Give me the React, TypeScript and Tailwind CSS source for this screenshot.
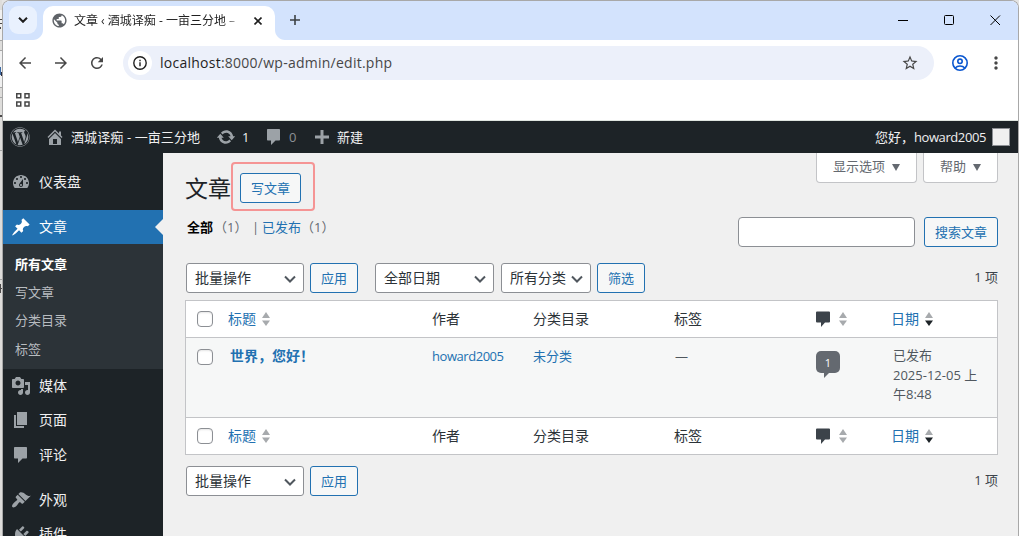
import React from "react";
import { FaWordpress } from "react-icons/fa";
import { MdArrowBack, MdArrowForward, MdRefresh, MdStarBorder, MdMoreVert, MdPublic } from "react-icons/md";

const PATHS = {
  dashboard:
    "M3.76 16h12.48c1.1-1.37 1.76-3.11 1.76-5 0-4.42-3.58-8-8-8s-8 3.58-8 8c0 1.89.66 3.63 1.76 5zM10 4c.55 0 1 .45 1 1s-.45 1-1 1-1-.45-1-1 .45-1 1-1zM6 6c.55 0 1 .45 1 1s-.45 1-1 1-1-.45-1-1 .45-1 1-1zm8 0c.55 0 1 .45 1 1s-.45 1-1 1-1-.45-1-1 .45-1 1-1zm-5.37 5.55L12 7v6c0 1.1-.9 2-2 2s-2-.9-2-2c0-.57.24-1.08.63-1.45zM4 10c.55 0 1 .45 1 1s-.45 1-1 1-1-.45-1-1 .45-1 1-1zm12 0c.55 0 1 .45 1 1s-.45 1-1 1-1-.45-1-1 .45-1 1-1zm-5 3c0-.55-.45-1-1-1s-1 .45-1 1 .45 1 1 1 1-.45 1-1z",
  post: "M10.44 3.02l1.82-1.82 6.36 6.35-1.83 1.82c-1.05-.68-2.48-.57-3.41.36l-.75.75c-.92.93-1.04 2.35-.35 3.41l-1.83 1.82-2.41-2.41-2.8 2.79c-.42.42-3.38 2.71-3.8 2.29s1.86-3.39 2.28-3.81l2.79-2.79L4.1 9.36l1.83-1.82c1.05.69 2.48.57 3.4-.36l.75-.75c.93-.92 1.05-2.35.36-3.41z",
  media:
    "M13 11V4c0-.55-.45-1-1-1h-1.67L9 1H5L3.67 3H2c-.55 0-1 .45-1 1v7c0 .55.45 1 1 1h10c.55 0 1-.45 1-1zM7 4.5c1.38 0 2.5 1.12 2.5 2.5S8.38 9.5 7 9.5 4.5 8.38 4.5 7 5.62 4.5 7 4.5zM14 6h5v10.5c0 1.38-1.12 2.5-2.5 2.5S14 17.88 14 16.5s1.12-2.5 2.5-2.5c.17 0 .34.02.5.05V9h-3V6zm-4 8.05V13h2v3.5c0 1.38-1.12 2.5-2.5 2.5S7 17.88 7 16.5 8.12 14 9.5 14c.17 0 .34.02.5.05z",
  page: "M6 15V2h10v13H6zm-1 1h8v2H3V5h2v11z",
  comment: "M4 2h11c.6 0 1 .4 1 1v9.500c0 .6-.4 1-1 1h-3.500L7 18v-4.500H4c-.6 0-1-.4-1-1V3c0-.6.4-1 1-1z",
  appearance:
    "M14.48 11.06L7.41 3.99l1.5-1.5c.5-.56 2.3-.47 3.51.32 1.21.8 1.43 1.28 2.91 2.1 1.18.64 2.45 1.26 4.45.85zm-.71.71L6.7 4.7 4.93 6.47c-.39.39-.39 1.02 0 1.41l1.06 1.06c.39.39.39 1.03 0 1.42-.6.6-1.43 1.11-2.21 1.69-.35.26-.7.53-1.01.84C1.43 14.23.4 16.08 1.4 17.07c.99 1 2.84-.03 4.18-1.36.31-.31.58-.66.85-1.02.57-.78 1.08-1.61 1.69-2.21.39-.39 1.02-.39 1.41 0l1.06 1.06c.39.39 1.02.39 1.41 0z",
  plugins:
    "M13.11 4.36L9.87 7.6 8 5.73l3.24-3.24c.35-.34 1.05-.2 1.56.32.52.51.66 1.21.31 1.55zm-8 1.77l.91-1.12 9.01 9.01-1.19.84c-.71.71-2.63 1.16-3.82 1.16H6.14L4.9 17.26c-.59.59-1.54.59-2.12 0-.59-.58-.59-1.53 0-2.12l1.24-1.24v-3.88c0-1.13.4-3.19 1.09-3.89zm7.26 3.97l3.24-3.24c.34-.35 1.04-.21 1.55.31.52.51.66 1.21.31 1.55l-3.24 3.25z",
  home: "M16 8.5l1.53 1.53-1.06 1.06L10 4.6l-6.47 6.49-1.06-1.06L10 2.5l4 4v-2h2v4zm-6-2.46l6 5.99V18H4v-5.97zM12 17v-5H8v5h4z",
  update:
    "M10.2 3.28c3.53 0 6.43 2.61 6.92 6h2.08l-3.5 4-3.5-4h2.32c-.45-1.97-2.21-3.45-4.32-3.45-1.45 0-2.73.71-3.54 1.78L4.95 5.66C6.23 4.2 8.11 3.28 10.2 3.28zm-.4 13.44c-3.52 0-6.43-2.61-6.92-6H.8l3.5-4c1.17 1.33 2.33 2.67 3.5 4H5.48c.45 1.97 2.21 3.45 4.32 3.45 1.45 0 2.73-.71 3.54-1.78l1.71 1.95c-1.28 1.46-3.15 2.38-5.25 2.38z",
  plus: "M17 8.5v3h-5.500V17h-3v-5.500H3v-3h5.500V3h3v5.500z",
};

function Dash({ name, className = "size-5" }: { name: keyof typeof PATHS; className?: string }) {
  return (
    <svg viewBox="0 0 20 20" className={`shrink-0 fill-current ${className}`}>
      <path d={PATHS[name]} fillRule="evenodd" />
    </svg>
  );
}

function BrowserChrome() {
  return (
    <header className="shrink-0 bg-white text-[#1f1f1f]">
      <div className="flex h-[39px] bg-[#d3e3fd]">
        <div className="flex w-10 shrink-0 pt-[5px] pl-1.5">
          <button className="grid size-7 place-items-center rounded-[9px] bg-[#e9f1fe]">
            <svg viewBox="0 0 10 6" className="h-1.5 w-2.5 fill-none stroke-[#1f1f1f] stroke-2">
              <path d="M1 .8l4 4 4-4" />
            </svg>
          </button>
        </div>
        <div className="relative mt-[5px] flex h-[34px] w-[232px] shrink-0 items-center rounded-t-[10px] bg-white pb-[5px] pl-2">
          <svg viewBox="0 0 10 10" className="absolute bottom-0 -left-2.5 size-2.5 fill-white">
            <path d="M10 0v10H0C5.500 10 10 5.500 10 0z" />
          </svg>
          <svg viewBox="0 0 10 10" className="absolute -right-2.5 bottom-0 size-2.5 fill-white">
            <path d="M0 0v10h10C4.500 10 0 5.500 0 0z" />
          </svg>
          <MdPublic className="size-[17px] shrink-0 text-[#5f6368]" />
          <span className="ml-[6px] w-[170px] text-[12px] leading-5 whitespace-nowrap [mask-image:linear-gradient(to_right,black_88%,transparent)]">
            文章 ‹ 酒城译痴 - 一亩三分地 –
          </span>
          <svg viewBox="0 0 8 8" className="ml-[10px] size-2 shrink-0 fill-none stroke-[#1f1f1f] stroke-[1.6]">
            <path d="M.5.500l7 7M7.500.500l-7 7" />
          </svg>
        </div>
        <svg viewBox="0 0 10 10" className="mt-[14px] ml-[15px] size-2.5 fill-none stroke-[#3c4043] stroke-[1.6]">
          <path d="M5 0v10M0 5h10" />
        </svg>
        <div className="ml-auto flex h-[39px] items-center gap-[35px] pr-[17px]">
          <svg viewBox="0 0 11 11" className="size-[11px] fill-none stroke-black">
            <path d="M0 5.500h10" />
          </svg>
          <svg viewBox="0 0 11 11" className="size-[11px] fill-none stroke-black">
            <rect x=".5" y=".5" width="9" height="9" rx="1" />
          </svg>
          <svg viewBox="0 0 11 11" className="size-[11px] fill-none stroke-black">
            <path d="M.5.500l9.500 9.500M10 .5L.5 10" />
          </svg>
        </div>
      </div>
      <div className="flex h-[46px] items-center rounded-tr-[8px] text-[#474747]">
        <MdArrowBack className="ml-[13px] size-[18px]" />
        <MdArrowForward className="ml-[18px] size-[18px]" />
        <MdRefresh className="ml-[18px] size-[18px]" />
        <div className="ml-[17px] flex h-[34px] w-[811px] items-center rounded-full bg-[#ecf0fa] pl-[5px]">
          <span className="grid size-6 place-items-center rounded-full bg-white">
            <svg viewBox="0 0 14 14" className="size-3.5 fill-none stroke-[#1f1f1f] stroke-[1.4]">
              <circle cx="7" cy="7" r="6.200" />
              <path d="M7 6.200v4M7 3.700v1.500" />
            </svg>
          </span>
          <span className="ml-2 text-[14px] leading-5 tracking-[0.25px]">
            <span className="text-[#1f1f1f]">localhost</span>:8000/wp-admin/edit.php
          </span>
          <MdStarBorder className="mr-[15px] ml-auto size-[18px]" />
        </div>
        <svg viewBox="0 0 16 16" className="ml-[18px] size-4 fill-none stroke-[#0b57d0] stroke-[1.6]">
          <circle cx="8" cy="8" r="7.200" />
          <circle cx="8" cy="6.300" r="2.200" />
          <path d="M3.200 13C5.500 10.300 10.500 10.300 12.800 13" />
        </svg>
        <MdMoreVert className="ml-[18px] size-5" />
      </div>
      <div className="flex h-[34px] items-start pt-[7px] pl-[13px] text-[#474747]">
        <svg viewBox="0 0 14 14" className="size-3.5 fill-none stroke-current stroke-[1.5]">
          <path d="M.75.75h4v4h-4zM9 .75h4v4H9zM.75 9h4v4h-4zM9 9h4v4H9z" />
        </svg>
      </div>
      <div className="h-px bg-[#dfe5e0]" />
    </header>
  );
}

function AdminBar() {
  return (
    <div className="flex h-8 shrink-0 items-center bg-[#1d2327] text-[13px] leading-8 text-[#f0f0f1]">
      <FaWordpress className="ml-[7px] size-5 text-[#9ca2a7]" />
      <Dash name="home" className="ml-[15px] size-5 text-[#9ca2a7]" />
      <span className="ml-[6px] w-[130px] tracking-[0.1px] whitespace-nowrap">酒城译痴 - 一亩三分地</span>
      <Dash name="update" className="ml-[15px] size-5 text-[#9ca2a7]" />
      <span className="ml-[6px] w-[8px]">1</span>
      <Dash name="comment" className="ml-[14px] size-5 text-[#9ca2a7]" />
      <span className="ml-[5px] w-[8px] text-[#8c9196]">0</span>
      <Dash name="plus" className="ml-[15px] size-5 text-[#9ca2a7]" />
      <span className="ml-[5px]">新建</span>
      <span className="mr-[6px] ml-auto">
        您好，<span className="tracking-[-0.4px]">howard2005</span>
      </span>
      <span className="mr-[8px] size-[18px] border border-[#8c8f94] bg-[#f0f0f0]" />
    </div>
  );
}

function MenuItem({ icon, label, active }: { icon: keyof typeof PATHS; label: string; active?: boolean }) {
  return (
    <div
      className={
        active
          ? "relative flex h-[34px] shrink-0 items-center bg-[#2271b1] text-white"
          : "flex h-[34.3px] shrink-0 items-center text-[#f0f0f1]"
      }
    >
      <span className={active ? "ml-[8px] flex w-[28px]" : "ml-[8px] flex w-[28px] text-[#9ca2a7]"}>
        <Dash name={icon} />
      </span>
      <span className="text-[14px] leading-5">{label}</span>
      {active && (
        <svg viewBox="0 0 8 16" className="absolute top-[9px] right-0 h-4 w-2 fill-[#f0f0f0]">
          <path d="M8 0v16L0 8z" />
        </svg>
      )}
    </div>
  );
}

function Sidebar() {
  return (
    <nav className="flex w-40 shrink-0 flex-col bg-[#1d2327] pt-3">
      <MenuItem icon="dashboard" label="仪表盘" />
      <div className="h-[10.7px] shrink-0" />
      <MenuItem icon="post" label="文章" active />
      <ul className="h-[125px] shrink-0 bg-[#2c3338] pt-[6px] pl-3 text-[13px] leading-[28.2px] text-[#b8bcc0]">
        <li className="font-bold text-white">所有文章</li>
        <li>写文章</li>
        <li>分类目录</li>
        <li>标签</li>
      </ul>
      <MenuItem icon="media" label="媒体" />
      <MenuItem icon="page" label="页面" />
      <MenuItem icon="comment" label="评论" />
      <div className="h-[10.7px] shrink-0" />
      <MenuItem icon="appearance" label="外观" />
      <MenuItem icon="plugins" label="插件" />
    </nav>
  );
}

function Button({ className = "", children }: { className?: string; children: React.ReactNode }) {
  return (
    <button
      className={`flex h-[30px] shrink-0 items-center justify-center rounded-[3px] border border-[#2271b1] bg-[#f6f7f7] pb-px text-[13px] leading-5 text-[#2271b1] ${className}`}
    >
      {children}
    </button>
  );
}

function Select({ className = "", children }: { className?: string; children: React.ReactNode }) {
  return (
    <button
      className={`flex h-[30px] shrink-0 items-center justify-between rounded-[3px] border border-[#8c8f94] bg-white pr-[7px] pl-2 text-[14px] leading-5 text-[#2c3338] ${className}`}
    >
      <span className="pb-px">{children}</span>
      <svg viewBox="0 0 12 8" className="mt-px h-2 w-3 fill-none stroke-[#50575e] stroke-2">
        <path d="M1 1.500l5 5 5-5" />
      </svg>
    </button>
  );
}

function Sorter({ desc }: { desc?: boolean }) {
  return (
    <svg viewBox="0 0 8 14" className="-mt-px h-3.5 w-2 fill-[#a7aaad]">
      <path d="M4 0l4 6H0z" />
      <path d="M0 8.500h8l-4 5.500z" className={desc ? "fill-[#1d2327]" : ""} />
    </svg>
  );
}

function Checkbox() {
  return <span className="block size-4 rounded-[4px] border border-[#8c8f94] bg-white shadow-[inset_0_1px_2px_rgba(0,0,0,0.1)]" />;
}

const COLS = "grid grid-cols-[42px_204px_101px_142px_141px_76px_105px]";

function HeadRow() {
  return (
    <div className={`${COLS} h-[36px] items-center text-[14px] leading-5 text-[#2c3338]`}>
      <span className="pl-[11px]">
        <Checkbox />
      </span>
      <span className="flex items-center gap-[6px] text-[#2271b1]">
        标题
        <Sorter />
      </span>
      <span>作者</span>
      <span>分类目录</span>
      <span className="-ml-px">标签</span>
      <span className="flex items-center gap-[9px]">
        <svg viewBox="0 0 14 16" className="h-4 w-3.5 fill-[#3c434a]">
          <path d="M1 .5h12a1 1 0 0 1 1 1v9a1 1 0 0 1-1 1H9L5 16v-4.500H1a1 1 0 0 1-1-1v-9a1 1 0 0 1 1-1z" />
        </svg>
        <Sorter />
      </span>
      <span className="-ml-px flex items-center gap-[6px] text-[#2271b1]">
        日期
        <Sorter desc />
      </span>
    </div>
  );
}

function PostsTable() {
  return (
    <div className="mt-[7px] border border-[#c3c4c7] bg-white">
      <HeadRow />
      <div className={`${COLS} h-[81px] border-y border-[#c3c4c7] bg-[#f6f7f7] pt-[8px] text-[13px] leading-5 text-[#50575e]`}>
        <span className="pt-[3px] pl-[11px]">
          <Checkbox />
        </span>
        <span className="pl-[2px] text-[14px] font-bold text-[#2271b1]">世界，您好！</span>
        <span className="tracking-[-0.45px] text-[#2271b1]">howard2005</span>
        <span className="text-[#2271b1]">未分类</span>
        <span>—</span>
        <span className="flex flex-col items-start pt-[5px]">
          <span className="flex h-[22px] w-6 items-center justify-center rounded-[5px] bg-[#646970] text-[11px] leading-none text-white">1</span>
          <svg viewBox="0 0 5 5" className="ml-2 size-[5px] fill-[#646970]">
            <path d="M0 0h5L0 5z" />
          </svg>
        </span>
        <span className="pl-px leading-[19.5px]">
          已发布
          <br />
          2025-12-05 上
          <br />
          午8:48
        </span>
      </div>
      <HeadRow />
    </div>
  );
}

function ScreenTab({ className, children }: { className: string; children: React.ReactNode }) {
  return (
    <button
      className={`flex h-[30px] items-center justify-center gap-[7px] rounded-b-[4px] border border-t-0 border-[#c3c4c7] bg-white pb-[3px] ${className}`}
    >
      {children}
      <svg viewBox="0 0 8 7" className="mt-0.5 h-[7px] w-2 fill-current">
        <path d="M0 0h8L4 7z" />
      </svg>
    </button>
  );
}

function Content() {
  return (
    <main className="flex min-w-0 flex-1 flex-col bg-[#f0f0f0] pr-[20px] pl-[22px] text-[13px] text-[#3c434a]">
      <div className="flex h-[64px] items-start">
        <h1 className="mt-[19px] w-[46px] text-[23px] leading-[32px] whitespace-nowrap text-[#1d2327]">文章</h1>
        <div className="mt-[9px] flex h-[49px] w-[84px] items-start rounded-[4px] border-2 border-[#f59494] pt-[9px] pl-[7px]">
          <Button className="w-[61px]">写文章</Button>
        </div>
        <div className="ml-auto flex gap-[6px] leading-5 text-[#646970]">
          <ScreenTab className="w-[101px]">显示选项</ScreenTab>
          <ScreenTab className="w-[75px]">帮助</ScreenTab>
        </div>
      </div>
      <div className="flex h-[30px] items-start">
        <div className="flex leading-5 whitespace-nowrap text-[#646970]">
          <b className="ml-[2px] w-[27px] text-black">全部</b>
          <span className="w-[38px]">（1）</span>
          <span className="w-[10px]">|</span>
          <span className="w-[39px] text-[#2271b1]">已发布</span>
          <span>（1）</span>
        </div>
        <div className="ml-auto h-[30px] w-[177px] rounded-[4px] border border-[#8c8f94] bg-white" />
        <Button className="ml-[9px] w-[74px]">搜索文章</Button>
      </div>
      <div className="mt-4 flex h-[30px] items-center pl-px">
        <Select className="w-[118px]">批量操作</Select>
        <Button className="ml-[6px] w-[48px]">应用</Button>
        <Select className="ml-[17px] w-[119px]">全部日期</Select>
        <Select className="ml-[7px] w-[90px]">所有分类</Select>
        <Button className="ml-[6px] w-[48px]">筛选</Button>
        <span className="ml-auto pb-[2px] leading-5">1 项</span>
      </div>
      <PostsTable />
      <div className="mt-[11px] flex h-[30px] items-center pl-px">
        <Select className="w-[118px]">批量操作</Select>
        <Button className="ml-[6px] w-[48px]">应用</Button>
        <span className="ml-auto pb-[2px] leading-5">1 项</span>
      </div>
    </main>
  );
}

function DesktopSliver() {
  return (
    <svg viewBox="0 0 2 536" className="h-[536px] w-[2px] shrink-0">
      <path d="M0 0h2v536H0z" fill="#dedddb" />
      <path d="M0 10h2v30H0zM0 51h2v36H0z" fill="#f0f0f0" />
      <path d="M0 40h2v1H0zM0 50h2v1H0zM0 87h2v1H0zM0 97h2v1H0zM0 150h2v1H0zM0 279h2v1H0z" fill="#a5a5a5" />
      <path d="M0 19h2v1H0zM0 23h2v1H0zM0 27h1v2H0zM0 115h2v2H0zM0 284h1v9H0zM0 288h2v1H0z" fill="#4c4a4a" />
      <path d="M0 67h1v8H0z" fill="#3c6aa5" />
      <path d="M1 72h1v4H1z" fill="#2a2a3a" />
    </svg>
  );
}

export default function App() {
  return (
    <div className="flex h-[536px] w-[1019px] overflow-hidden bg-[#e4e4e4] font-['Open_Sans','Noto_Sans_CJK_SC',sans-serif]">
      <DesktopSliver />
      <div className="flex w-[1017px] flex-col overflow-hidden rounded-t-[8px] border border-b-0 border-[#a8a8a8] bg-[#d3e3fd]">
        <BrowserChrome />
        <AdminBar />
        <div className="flex min-h-0 flex-1">
          <Sidebar />
          <Content />
        </div>
      </div>
    </div>
  );
}
